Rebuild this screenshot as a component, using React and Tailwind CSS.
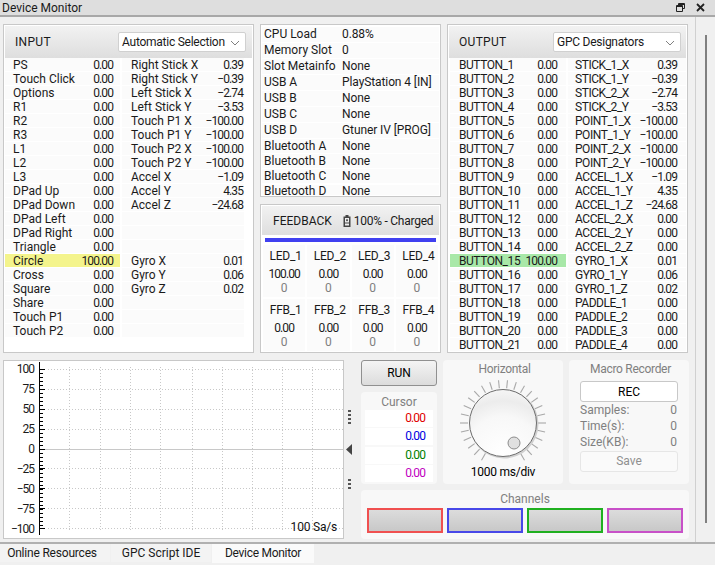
import React from "react";

const INPUT = [
  ["PS","0.00","Right Stick X","0.39"],["Touch Click","0.00","Right Stick Y","−0.39"],["Options","0.00","Left Stick X","−2.74"],["R1","0.00","Left Stick Y","−3.53"],
  ["R2","0.00","Touch P1 X","−100.00"],["R3","0.00","Touch P1 Y","−100.00"],["L1","0.00","Touch P2 X","−100.00"],["L2","0.00","Touch P2 Y","−100.00"],
  ["L3","0.00","Accel X","−1.09"],["DPad Up","0.00","Accel Y","4.35"],["DPad Down","0.00","Accel Z","−24.68"],["DPad Left","0.00","",""],["DPad Right","0.00","",""],["Triangle","0.00","",""],
  ["Circle","100.00","Gyro X","0.01"],["Cross","0.00","Gyro Y","0.06"],["Square","0.00","Gyro Z","0.02"],["Share","0.00","",""],["Touch P1","0.00","",""],["Touch P2","0.00","",""],
];
const C2 = [["STICK_1_X","0.39"],["STICK_1_Y","−0.39"],["STICK_2_X","−2.74"],["STICK_2_Y","−3.53"],["POINT_1_X","−100.00"],["POINT_1_Y","−100.00"],["POINT_2_X","−100.00"],["POINT_2_Y","−100.00"],["ACCEL_1_X","−1.09"],["ACCEL_1_Y","4.35"],["ACCEL_1_Z","−24.68"],["ACCEL_2_X","0.00"],["ACCEL_2_Y","0.00"],["ACCEL_2_Z","0.00"],["GYRO_1_X","0.01"],["GYRO_1_Y","0.06"],["GYRO_1_Z","0.02"],["PADDLE_1","0.00"],["PADDLE_2","0.00"],["PADDLE_3","0.00"],["PADDLE_4","0.00"]];
const OUTPUT = C2.map((c, i) => [`BUTTON_${i + 1}`, i === 14 ? "100.00" : "0.00", c[0], c[1]]);
const INFO = [["CPU Load","0.88%"],["Memory Slot","0"],["Slot Metainfo","None"],["USB A","PlayStation 4 [IN]"],["USB B","None"],["USB C","None"],["USB D","Gtuner IV [PROG]"],["Bluetooth A","None"],["Bluetooth B","None"],["Bluetooth C","None"],["Bluetooth D","None"]];

function Num({ children, className = "" }) {
  return <span className={`tracking-[-0.9px] ${className}`}>{children}</span>;
}

function Chevron() {
  return (
    <svg width="10" height="6" viewBox="0 0 10 6" className="absolute right-[5px] top-[7px]">
      <path d="M1 1l4 4 4-4" fill="none" stroke="#808080" strokeWidth="1" />
    </svg>
  );
}

function PanelHeader({ title, value, w, titleW }) {
  return (
    <div className="h-[32px] flex items-center bg-gradient-to-b from-[#f2f2f2] to-[#dedede]">
      <span className={`${titleW} pl-[10px] tracking-[0.3px]`}>{title}</span>
      <div className={`relative ${w} h-[20px] bg-white border border-[#d0d0d0] rounded-[2px] pl-[3px] leading-[18px] tracking-[-0.25px]`}>
        {value}
        <Chevron />
      </div>
    </div>
  );
}

function DataRows({ rows, hlClass, hlIndex, col1, col2, nameClass = "" }) {
  return (
    <div className="flex flex-col">
      {rows.map((r, i) => (
        <div key={i} className="flex h-[14px] leading-[14px] border-b border-white">
          <div className={`flex justify-between ${col1} ${i === hlIndex ? hlClass : "bg-[#fbfbfb]"}`}>
            <span className={nameClass}>{r[0]}</span>
            <Num>{r[1]}</Num>
          </div>
          <div className={`flex justify-between ml-[2px] ${col2} bg-[#fbfbfb]`}>
            <span className={nameClass}>{r[2]}</span>
            <Num>{r[3]}</Num>
          </div>
        </div>
      ))}
    </div>
  );
}

function FeedbackCell({ name, value }) {
  return (
    <div className="flex-1 flex flex-col items-center bg-[#fbfbfb] pt-[4px] h-[52px]">
      <span className="leading-[15px] tracking-[-0.25px] ml-[3px]">{name}</span>
      <Num className="leading-[15px] mt-[3px]">{value}</Num>
      <span className="leading-[12px] text-[#808080]">0</span>
    </div>
  );
}

function Chart() {
  const ys = [369, 389, 409, 429, 449, 468, 488, 508, 528].map((y) => y - 361);
  const xs = [69, 100, 130, 160, 192, 222, 252, 282, 312];
  const minor = [];
  for (let y = 8; y <= 167; y += 4) minor.push(y);
  return (
    <svg width="339" height="177" viewBox="0 0 339 177" className="absolute left-0 top-0">
      {xs.map((x) => <line key={x} x1={x - 3.5} x2={x - 3.5} y1="6" y2="169" stroke="#c8c8c8" strokeDasharray="1 2" />)}
      {ys.map((y, i) => i === 4
        ? <line key={y} x1="40" x2="340" y1={y + 0.5} y2={y + 0.5} stroke="#c8c8c8" />
        : <line key={y} x1="44" x2="340" y1={y + 0.5} y2={y + 0.5} stroke="#c8c8c8" strokeDasharray="1 2" />)}
      <line x1="35.5" x2="35.5" y1="1" y2="174" stroke="#000" />
      {minor.map((y) => <line key={y} x1="36" x2="39" y1={y + 0.5} y2={y + 0.5} stroke="#000" />)}
      {ys.map((y) => <line key={y} x1="36" x2="41" y1={y + 0.5} y2={y + 0.5} stroke="#000" />)}
    </svg>
  );
}

function Knob() {
  const ticks = [];
  for (let n = -12; n <= 12; n++) {
    const angles = n === 0 ? [-6, 6] : [n > 0 ? 6 + 12 * n : -6 + 12 * n];
    angles.forEach((a) => {
      const r = (a * Math.PI) / 180;
      const s = Math.sin(r), c = -Math.cos(r);
      ticks.push(<line key={a} x1={45 + s * 35} y1={45 + c * 35} x2={45 + s * 43} y2={45 + c * 43} stroke="#a8a8a8" strokeWidth="1.1" />);
    });
  }
  return (
    <svg width="90" height="90" viewBox="0 0 90 90" className="block">
      <defs>
        <radialGradient id="k" cx="0.5" cy="0.95" r="1">
          <stop offset="0" stopColor="#ffffff" />
          <stop offset="0.55" stopColor="#f8f8f8" />
          <stop offset="0.78" stopColor="#ececec" />
          <stop offset="1" stopColor="#f8f8f8" />
        </radialGradient>
      </defs>
      {ticks}
      <circle cx="46" cy="46" r="34.5" fill="#d0d0d0" />
      <circle cx="45" cy="45" r="33.5" fill="url(#k)" stroke="#6e6e6e" strokeWidth="1" />
      <circle cx="56" cy="65" r="6" fill="#e0e0e0" stroke="#8c8c8c" strokeWidth="1" />
    </svg>
  );
}

function Dots({ n }) {
  return (
    <div className="flex flex-col gap-[2px]">
      {Array.from({ length: n }).map((_, i) => <div key={i} className="w-[3px] h-[2px] bg-[#555]" />)}
    </div>
  );
}

function Splitter() {
  return (
    <div className="w-[17px] flex flex-col items-start">
      <div className="mt-[50px] ml-[4px]"><Dots n={4} /></div>
      <svg width="6" height="11" viewBox="0 0 6 11" className="mt-[20px] ml-[2px]"><path d="M6 0v11L0 5.5z" fill="#444" /></svg>
      <div className="mt-[24px] ml-[4px]"><Dots n={3} /></div>
    </div>
  );
}

export default function App() {
  return (
    <div className="w-[715px] h-[565px] overflow-hidden bg-[#f0f0f0] text-[12px] text-[#1a1a1a] flex flex-col" style={{ fontFamily: "Roboto, 'Liberation Sans', sans-serif" }}>
      <div className="h-[17px] shrink-0 flex items-center justify-between bg-[#dedede] border-b-2 border-[#a8a8a8] pl-[2px] pr-[10px]">
        <span className="leading-[14px]">Device Monitor</span>
        <div className="flex items-center gap-[11px]">
          <svg width="9" height="9" viewBox="0 0 9 9"><path d="M2.5 2V.5h6v5H7M.5 2.5h6v6h-6zM.5 3.5h6M2.5 1.5h6" fill="none" stroke="#222" /></svg>
          <svg width="9" height="9" viewBox="0 0 9 9"><path d="M1 1l7 7M8 1L1 8" stroke="#222" strokeWidth="1.8" /></svg>
        </div>
      </div>
      <div className="flex h-[527px] shrink-0 border-b-2 border-[#b0b0b0]">
        <div className="w-[696px] shrink-0 border-r border-[#d0d0d0] pl-[3px] pt-[7px] flex flex-col gap-[7px]">
          <div className="flex gap-[6px] h-[329px]">
            <section className="w-[251px] bg-white border border-[#c8c8c8] p-[1px]">
              <PanelHeader title="INPUT" value="Automatic Selection" w="w-[128px]" titleW="w-[113px]" />
              <DataRows rows={INPUT} hlIndex={14} hlClass="bg-[#f4f48c]" col1="w-[115px] pl-[8px] pr-[7px]" col2="w-[122px] pl-[9px] pr-[1px]" />
            </section>
            <div className="w-[181px] flex flex-col gap-[7px]">
              <section className="h-[173px] bg-white border border-[#c8c8c8] px-[1px] pt-[2px] flex flex-col">
                {INFO.map(([k, v], i) => (
                  <div key={k} className={`flex shrink-0 border-b border-white ${i < 7 ? "h-[16px] leading-[15px]" : i < 10 ? "h-[15px] leading-[15px]" : "h-[11px] mt-[1px] leading-[13px]"}`}>
                    <div className="w-[78px] pl-[2px] bg-[#fbfbfb] whitespace-nowrap">{k}</div>
                    <div className="flex-1 pl-[2px] bg-[#fbfbfb] whitespace-nowrap tracking-[-0.1px]">{v}</div>
                  </div>
                ))}
              </section>
              <section className="h-[149px] bg-white border border-[#c8c8c8] p-[1px]">
                <div className="h-[29px] flex items-center bg-gradient-to-b from-[#f2f2f2] to-[#dedede] pl-[11px] whitespace-nowrap">
                  <span className="tracking-[0px]">FEEDBACK</span>
                  <svg width="8" height="12" viewBox="0 0 8 12" className="ml-[11px] mr-[3px]"><path d="M2.5 0h3v1.5h2V12H.5V1.5h2z" fill="#444" /><rect x="2" y="3" width="4" height="4.5" fill="#eee" /><path d="M3 5.2h2M4 4.2v2" stroke="#444" /><rect x="2" y="8.5" width="4" height="2" fill="#eee" /></svg>
                  <span className="tracking-[-0.25px]">100% - Charged</span>
                </div>
                <div className="h-[4px] mx-[3px] mt-[3px] bg-[#4040f0]" />
                <div className="flex gap-[2px] mt-[3px] px-[1px]">
                  {["LED_1","LED_2","LED_3","LED_4"].map((n, i) => <FeedbackCell key={n} name={n} value={i === 0 ? "100.00" : "0.00"} />)}
                </div>
                <div className="flex gap-[2px] mt-[2px] px-[1px]">
                  {["FFB_1","FFB_2","FFB_3","FFB_4"].map((n) => <FeedbackCell key={n} name={n} value="0.00" />)}
                </div>
              </section>
            </div>
            <section className="w-[241px] bg-white border border-[#c8c8c8] p-[1px]">
              <PanelHeader title="OUTPUT" value="GPC Designators" w="w-[128px]" titleW="w-[104px]" />
              <div className="pl-[1px]">
                <DataRows rows={OUTPUT} hlIndex={14} hlClass="bg-[#a8e8a8]" col1="w-[116px] pl-[9px] pr-[9px]" col2="w-[118px] pl-[7px] pr-[9px]" nameClass="tracking-[-0.45px]" />
              </div>
            </section>
          </div>
          <div className="flex h-[179px]">
            <section className="relative w-[341px] bg-white border border-[#c8c8c8]">
              <Chart />
              <div className="absolute left-0 w-[30px] top-[1px] flex flex-col items-end">
                {["100","75","50","25","0","−25","−50","−75","−100"].map((t) => (
                  <span key={t} className="h-[14px] mb-[6px] shrink-0 leading-[14px] tracking-[-1px]">{t}</span>
                ))}
              </div>
              <span className="absolute right-[6px] bottom-[4px] leading-[14px] tracking-[-0.2px] text-[#111]">100 Sa/s</span>
            </section>
            <Splitter />
            <div className="w-[328px] flex flex-col gap-[6px]">
              <div className="flex h-[124px] gap-[6px]">
                <div className="w-[76px] flex flex-col gap-[6px]">
                  <button className="h-[26px] border border-[#909090] rounded-[3px] bg-gradient-to-b from-[#f4f4f4] to-[#dcdcdc] text-black text-center">RUN</button>
                  <div className="h-[92px] bg-[#f8f8f8] rounded-[4px] px-[4px] pt-[2px] flex flex-col">
                    <div className="text-center text-[#808080] leading-[16px]">Cursor</div>
                    <Num className="h-[17px] mb-[1.3px] bg-white text-right leading-[17px] pr-[8px] text-[#e00000]">0.00</Num>
                    <Num className="h-[17px] mb-[1.3px] bg-white text-right leading-[17px] pr-[8px] text-[#0000e0]">0.00</Num>
                    <Num className="h-[17px] mb-[1.3px] bg-white text-right leading-[17px] pr-[8px] text-[#008000]">0.00</Num>
                    <Num className="h-[17px] bg-white text-right leading-[17px] pr-[8px] text-[#c000c0]">0.00</Num>
                  </div>
                </div>
                <div className="w-[120px] bg-[#f8f8f8] rounded-[4px] flex flex-col items-center">
                  <div className="text-[#808080] leading-[16px] mt-[1px] ml-[3px] tracking-[-0.3px]">Horizontal</div>
                  <div className="mt-[1px]"><Knob /></div>
                  <div className="leading-[14px] mt-[-3px] text-black tracking-[-0.25px]">1000 ms/div</div>
                </div>
                <div className="w-[120px] bg-[#f8f8f8] rounded-[4px] px-[11px] pt-[1px] flex flex-col">
                  <div className="text-[#808080] leading-[16px] text-center ml-[3px] tracking-[-0.3px]">Macro Recorder</div>
                  <button className="h-[21px] mt-[4px] bg-white border border-[#c8c8c8] rounded-[3px] text-black">REC</button>
                  {[["Samples:","0"],["Time(s):","0"],["Size(KB):","0"]].map(([k, v]) => (
                    <div key={k} className="flex justify-between h-[16px] leading-[16px] text-[#808080] first-of-type:mt-[5px] pr-[1px]"><span>{k}</span><span>{v}</span></div>
                  ))}
                  <div className="h-[21px] mt-[1px] bg-[#fafafa] border border-[#e6e6e6] rounded-[3px] text-[#909090] text-center leading-[19px]">Save</div>
                </div>
              </div>
              <div className="h-[49px] bg-[#f8f8f8] rounded-[4px] flex flex-col px-[6px]">
                <div className="text-center text-[#808080] leading-[16px] mt-[1px]">Channels</div>
                <div className="flex gap-[4px] mt-[1px]">
                  <div className="w-[76px] h-[25px] border-2 border-[#f05050] bg-gradient-to-b from-[#dcdcdc] to-[#c8c8c8]" />
                  <div className="w-[76px] h-[25px] border-2 border-[#4848e8] bg-gradient-to-b from-[#dcdcdc] to-[#c8c8c8]" />
                  <div className="w-[76px] h-[25px] border-2 border-[#20b020] bg-gradient-to-b from-[#dcdcdc] to-[#c8c8c8]" />
                  <div className="w-[76px] h-[25px] border-2 border-[#c850c8] bg-gradient-to-b from-[#dcdcdc] to-[#c8c8c8]" />
                </div>
              </div>
            </div>
          </div>
        </div>
        <div className="flex-1 flex justify-center pt-[18px]">
          <div className="w-[2px] h-[488px] bg-[#808080]" />
        </div>
      </div>
      <div className="flex h-[19px] shrink-0 bg-[#f0f0f0]">
        <div className="w-[110px] h-[18px] pr-[6px] bg-[#f3f3f3] text-center leading-[18px] tracking-[-0.2px]">Online Resources</div>
        <div className="w-[100px] h-[18px] ml-[1px] bg-[#f3f3f3] text-center leading-[18px]">GPC Script IDE</div>
        <div className="w-[102px] h-[19px] ml-[1px] bg-[#fafafa] text-center leading-[19px] tracking-[-0.3px]">Device Monitor</div>
      </div>
    </div>
  );
}
